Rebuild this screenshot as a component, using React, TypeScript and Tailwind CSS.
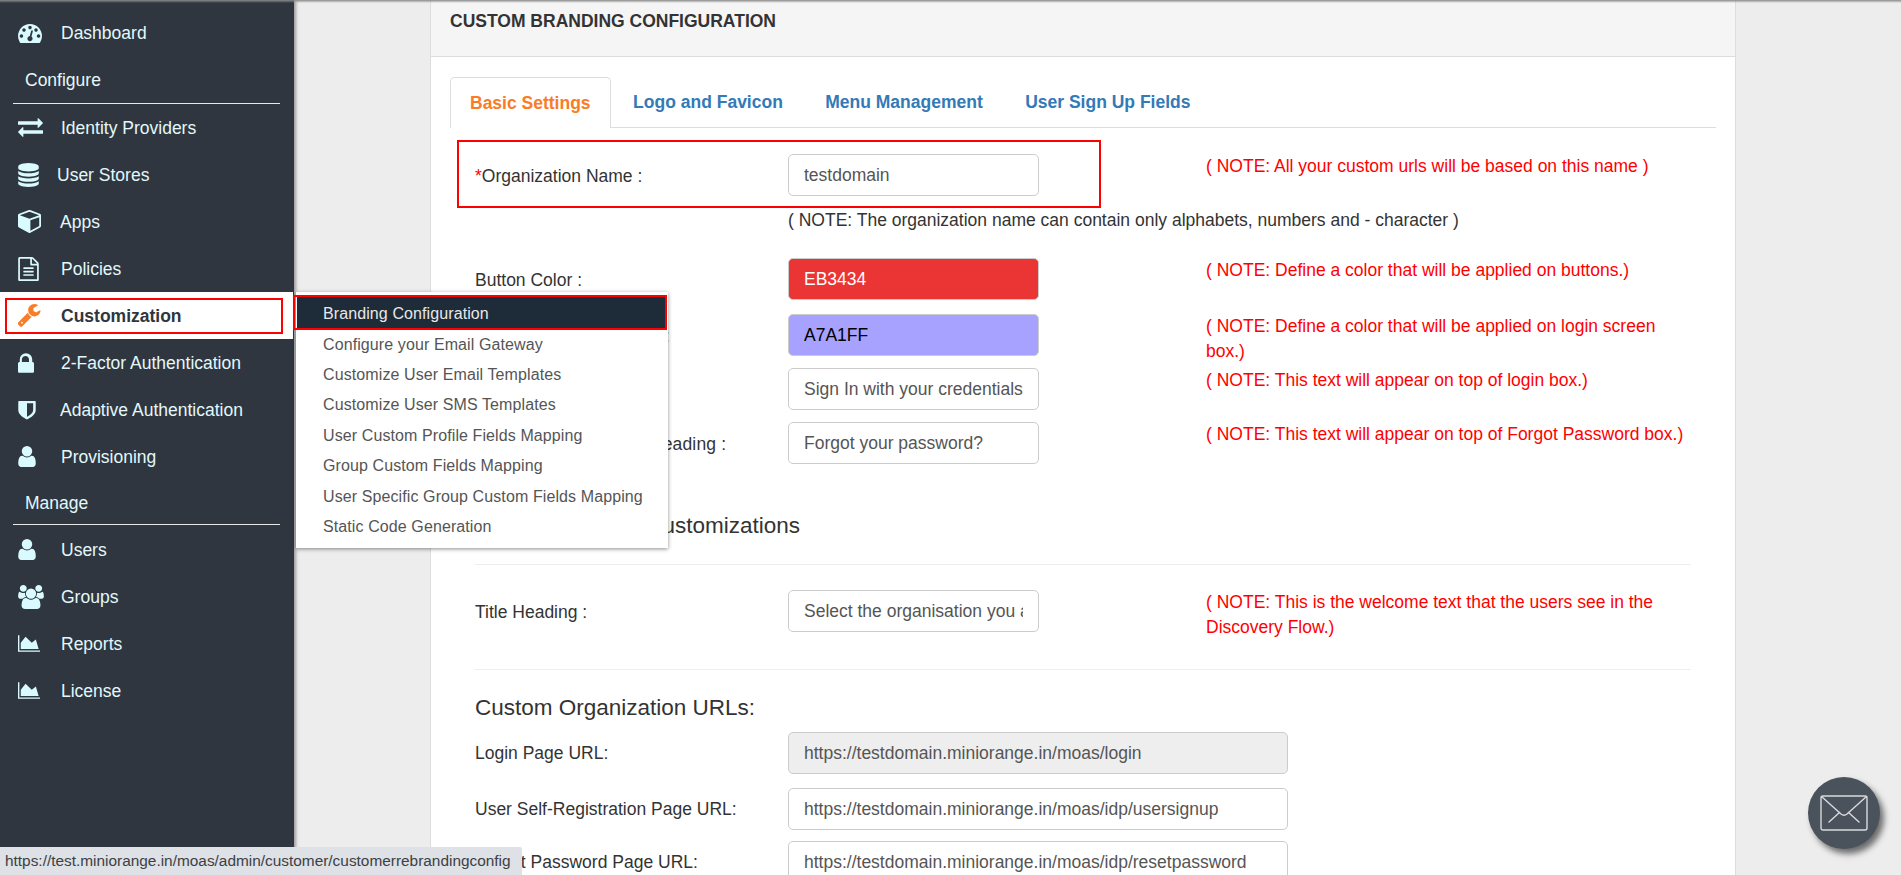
import React from "react";

type IconDef = { vb: string; d: string };

const I: Record<string, IconDef> = {
  dashboard: { vb: "0 256 1792 1408", d: "M384 1152q0-53-37.5-90.5t-90.5-37.5-90.5 37.5-37.5 90.5 37.5 90.5 90.5 37.5 90.5-37.5 37.5-90.5zm192-448q0-53-37.5-90.5t-90.5-37.5-90.5 37.5-37.5 90.5 37.5 90.5 90.5 37.5 90.5-37.5 37.5-90.5zm428 481l101-382q6-26-7.5-48.5t-38.5-29.5-48 6.5-30 39.5l-101 382q-60 5-107 43.5t-63 98.5q-20 77 20 146t117 89 146-20 89-117q16-60-6-117t-72-91zm660-33q0-53-37.5-90.5t-90.5-37.5-90.5 37.5-37.5 90.5 37.5 90.5 90.5 37.5 90.5-37.5 37.5-90.5zm-640-640q0-53-37.5-90.5t-90.5-37.5-90.5 37.5-37.5 90.5 37.5 90.5 90.5 37.5 90.5-37.5 37.5-90.5zm448 192q0-53-37.5-90.5t-90.5-37.5-90.5 37.5-37.5 90.5 37.5 90.5 90.5 37.5 90.5-37.5 37.5-90.5zm320 448q0 261-141 483-19 29-54 29h-1402q-35 0-54-29-141-221-141-483 0-182 71-348t191-286 286-191 348-71 348 71 286 191 191 286 71 348z" },
  exchange: { vb: "0 288 1792 1344", d: "M1792 1184v192q0 13-9.5 22.5t-22.5 9.5h-1376v192q0 13-9.5 22.5t-22.5 9.5q-12 0-24-10l-319-320q-9-9-9-22 0-14 9-23l320-320q9-9 23-9 13 0 22.5 9.5t9.5 22.5v192h1376q13 0 22.5 9.5t9.5 22.5zm0-544q0 14-9 23l-320 320q-9 9-23 9-13 0-22.5-9.5t-9.5-22.5v-192h-1376q-13 0-22.5-9.5t-9.5-22.5v-192q0-13 9.5-22.5t22.5-9.5h1376v-192q0-14 9-23t23-9q12 0 24 10l319 319q9 9 9 23z" },
  database: { vb: "0 0 1536 1792", d: "M768 768q237 0 443-43t325-127v170q0 69-103 128t-280 93.5-385 34.5-385-34.5-280-93.5-103-128v-170q119 84 325 127t443 43zm0 768q237 0 443-43t325-127v170q0 69-103 128t-280 93.5-385 34.5-385-34.5-280-93.5-103-128v-170q119 84 325 127t443 43zm0-384q237 0 443-43t325-127v170q0 69-103 128t-280 93.5-385 34.5-385-34.5-280-93.5-103-128v-170q119 84 325 127t443 43zm0-1152q208 0 385 34.5t280 93.5 103 128v128q0 69-103 128t-280 93.5-385 34.5-385-34.5-280-93.5-103-128v-128q0-69 103-128t280-93.5 385-34.5z" },
  cube: { vb: "0 128 1664 1664", d: "M896 1629l640-349v-636l-640 233v752zm-64-865l698-254-698-254-698 254zm832-252v768q0 35-18 65t-49 47l-704 384q-28 16-61 16t-61-16l-704-384q-31-17-49-47t-18-65v-768q0-40 23-73t61-47l704-256q22-8 44-8t44 8l704 256q38 14 61 47t23 73z" },
  file: { vb: "128 0 1536 1792", d: "M1596 380q28 28 48 76t20 88v1152q0 40-28 68t-68 28h-1344q-40 0-68-28t-28-68v-1600q0-40 28-68t68-28h896q40 0 88 20t76 48zm-444-244v376h376q-10-29-22-41l-313-313q-12-12-41-22zm384 1528v-1024h-416q-40 0-68-28t-28-68v-416h-768v1536h1280zm-1024-864q0-14 9-23t23-9h704q14 0 23 9t9 23v64q0 14-9 23t-23 9h-704q-14 0-23-9t-9-23v-64zm736 224q14 0 23 9t9 23v64q0 14-9 23t-23 9h-704q-14 0-23-9t-9-23v-64q0-14 9-23t23-9h704zm0 256q14 0 23 9t9 23v64q0 14-9 23t-23 9h-704q-14 0-23-9t-9-23v-64q0-14 9-23t23-9h704z" },
  wrench: { vb: "64 128 1600 1664", d: "M384 1472q0-26-19-45t-45-19-45 19-19 45 19 45 45 19 45-19 19-45zm644-420l-682 682q-37 37-90 37-52 0-91-37l-106-108q-38-36-38-90 0-53 38-91l681-681q39 98 114.5 173.5t173.5 114.5zm634-435q0 39-23 106-47 134-164.5 217.5t-258.5 83.5q-185 0-316.5-131.5t-131.5-316.5 131.5-316.5 316.5-131.5q58 0 121.5 16.5t107.5 46.5q16 11 16 28t-16 28l-293 169v224l193 106q5-3 79-48.5t135.5-81 70.5-35.5q15 0 23.5 10t8.5 25z" },
  lock: { vb: "304 64 1152 1408", d: "M520 704h576v-192q0-106-75-181t-181-75-181 75-75 181v192zm936 96v576q0 40-28 68t-68 28h-960q-40 0-68-28t-28-68v-576q0-40 28-68t68-28h32v-192q0-184 132-316t316-132 316 132 132 316v192h32q40 0 68 28t28 68z" },
  shield: { vb: "0 0 19 20", d: "M1 0.5H18Q18.7 0.5 18.7 1.2V10C18.7 15 13.5 18 9.5 20C5.5 18 0.3 15 0.3 10V1.2Q0.3 0.5 1 0.5ZM9.5 3V17.2C12.5 15.5 16 13.3 16 10V3Z" },
  user: { vb: "256 128 1280 1536", d: "M1536 1399q0 109-62.5 187t-150.5 78h-854q-88 0-150.5-78t-62.5-187q0-85 8.5-160.5t31.5-152 58.5-131 94-89 134.5-34.5q131 128 313 128t313-128q76 0 134.5 34.5t94 89 58.5 131 31.5 152 8.5 160.5zm-256-887q0 159-112.5 271.5t-271.5 112.5-271.5-112.5-112.5-271.5 112.5-271.5 271.5-112.5 271.5 112.5 112.5 271.5z" },
  users: { vb: "0 0 1920 1792", d: "M593 896q-162 5-265 128h-134q-82 0-138-40.5t-56-118.5q0-353 124-353 6 0 43.5 21t97.5 42.5 119 21.5q67 0 133-23-5 37-5 66 0 139 81 256zm1071 637q0 120-73 189.5t-194 69.5h-874q-121 0-194-69.5t-73-189.5q0-53 3.5-103.5t14-109 26.5-108.5 43-97.5 62-81 85.5-53.5 111.5-20q10 0 43 21.5t73 48 107 48 135 21.5 135-21.5 107-48 73-48 43-21.5q61 0 111.5 20t85.5 53.5 62 81 43 97.5 26.5 108.5 14 109 3.5 103.5zm-1024-1277q0 106-75 181t-181 75-181-75-75-181 75-181 181-75 181 75 75 181zm704 384q0 159-112.5 271.5t-271.5 112.5-271.5-112.5-112.5-271.5 112.5-271.5 271.5-112.5 271.5 112.5 112.5 271.5zm576 225q0 78-56 118.5t-138 40.5h-134q-103-123-265-128 81-117 81-256 0-29-5-66 66 23 133 23 59 0 119-21.5t97.5-42.5 43.5-21q124 0 124 353zm-128-609q0 106-75 181t-181 75-181-75-75-181 75-181 181-75 181 75 75 181z" },
  area: { vb: "0 128 2048 1536", d: "M2048 1536v128h-2048v-1536h128v1408h1920zm-384-1024l256 896h-1664v-576l448-576 576 576z" },
};

function Glyph({ def, className }: { def: IconDef; className: string }) {
  return (
    <svg viewBox={def.vb} className={className} fill="currentColor" fillRule="evenodd" aria-hidden="true">
      <path d={def.d} />
    </svg>
  );
}

const navTop = [
  { label: "Identity Providers", def: I.exchange, box: "w-[43px]", icon: "w-[25px] h-[19px]" },
  { label: "User Stores", def: I.database, box: "w-[39px]", icon: "w-[21px] h-[24px]" },
  { label: "Apps", def: I.cube, box: "w-[42px]", icon: "w-[23px] h-[23px]" },
  { label: "Policies", def: I.file, box: "w-[43px]", icon: "w-[21px] h-[24px]" },
];
const navMid = [
  { label: "2-Factor Authentication", def: I.lock, box: "w-[43px]", icon: "w-[16px] h-[20px]" },
  { label: "Adaptive Authentication", def: I.shield, box: "w-[42px]", icon: "w-[18px] h-[20px]" },
  { label: "Provisioning", def: I.user, box: "w-[43px]", icon: "w-[18px] h-[21px]" },
];
const navBottom = [
  { label: "Users", def: I.user, box: "w-[43px]", icon: "w-[18px] h-[21px]" },
  { label: "Groups", def: I.users, box: "w-[43px]", icon: "w-[26px] h-[24px]" },
  { label: "Reports", def: I.area, box: "w-[43px]", icon: "w-[22px] h-[17px]" },
  { label: "License", def: I.area, box: "w-[43px]", icon: "w-[22px] h-[17px]" },
];

const menuItems = [
  "Configure your Email Gateway",
  "Customize User Email Templates",
  "Customize User SMS Templates",
  "User Custom Profile Fields Mapping",
  "Group Custom Fields Mapping",
  "User Specific Group Custom Fields Mapping",
  "Static Code Generation",
];

type Item = { label: string; def: IconDef; box: string; icon: string };

function NavRow({ item, flush }: { item: Item; flush?: boolean }) {
  return (
    <div className="flex items-center h-[47px] pl-[18px] text-[#e3f8fb]">
      <div className={`${item.box} shrink-0 flex items-center`}>
        <Glyph def={item.def} className={`${item.icon} text-[#d9fbff]`} />
      </div>
      <span className={flush ? "" : "pt-[2px]"}>{item.label}</span>
    </div>
  );
}

function SectionTitle({ children }: { children: React.ReactNode }) {
  return <div className="flex items-center h-full pl-[25px] text-[#e3f8fb]">{children}</div>;
}

function Field({ value, tone, wide }: { value: string; tone?: string; wide?: boolean }) {
  return (
    <div
      className={`${wide ? "w-[500px]" : "w-[251px]"} h-[42px] rounded-[5px] border border-[#ccc] px-[15px] flex items-center ${tone ?? "bg-white text-[#555]"}`}
    >
      <div className="overflow-hidden whitespace-nowrap">{value}</div>
    </div>
  );
}

function Row({ label, value, tone, note, top }: { label: React.ReactNode; value: string; tone?: string; note: string; top: string }) {
  return (
    <div className={`grid grid-cols-[313px_418px_484px] grid-rows-[42px] h-[42px] ${top}`}>
      <div className="flex items-center whitespace-nowrap text-[#333] pt-[2px]">{label}</div>
      <Field value={value} tone={tone} />
      <div className="text-[#f00] leading-[25px]">{note}</div>
    </div>
  );
}

function UrlRow({ label, value, tone, top, labelClass }: { label: string; value: string; tone?: string; top: string; labelClass?: string }) {
  return (
    <div className={`grid grid-cols-[313px_1fr] grid-rows-[42px] h-[42px] ${top}`}>
      <div className={`flex items-center whitespace-nowrap text-[#333] ${labelClass ?? ""}`}>{label}</div>
      <Field value={value} tone={tone} wide />
    </div>
  );
}

export default function App() {
  return (
    <div className="relative flex w-[1901px] h-[875px] overflow-hidden bg-[#ededed] text-[17.5px] font-['Liberation_Sans',Arial,sans-serif]">
      {/* Sidebar */}
      <aside className="w-[294px] shrink-0 h-full bg-[#2f3640] pt-[10px] shadow-[2px_0_3px_rgba(0,0,0,0.35)] z-10">
        <NavRow flush item={{ label: "Dashboard", def: I.dashboard, box: "w-[43px]", icon: "w-[24px] h-[19px]" }} />
        <div className="h-[47px] relative">
          <SectionTitle>Configure</SectionTitle>
          <div className="absolute left-[13px] right-[14px] bottom-0 h-[1px] bg-[#e8e8e8]" />
        </div>
        {navTop.map((n) => (
          <NavRow key={n.label} item={n} />
        ))}
        <div className="relative flex items-center h-[47px] w-[293px] bg-white pl-[18px] font-bold text-[#2f3640]">
          <div className="w-[43px] shrink-0 flex items-center">
            <Glyph def={I.wrench} className="w-[23px] h-[23px] text-[#f97c26]" />
          </div>
          <span className="pt-[2px]">Customization</span>
          <div className="absolute left-[5px] right-[10px] top-[6px] bottom-[5px] border-2 border-[#f00]" />
        </div>
        {navMid.map((n) => (
          <NavRow key={n.label} item={n} />
        ))}
        <div className="h-[46px] relative">
          <SectionTitle>Manage</SectionTitle>
          <div className="absolute left-[13px] right-[14px] bottom-[1px] h-[1px] bg-[#e8e8e8]" />
        </div>
        {navBottom.map((n) => (
          <NavRow key={n.label} item={n} />
        ))}
      </aside>

      {/* Main panel */}
      <main className="ml-[136px] w-[1306px] h-[1000px] shrink-0 bg-white border-x border-[#ddd] box-border">
        <div className="h-[57px] bg-[#f5f5f5] border-b border-[#ddd] pl-[19px] pt-[9px]">
          <h1 className="font-bold text-[#333] uppercase leading-[24px]">Custom Branding Configuration</h1>
        </div>

        <div className="flex h-[51px] mt-[20px] mx-[19px] border-b border-[#ddd] font-bold">
          <div className="h-[51px] px-[19px] mr-[2.5px] flex items-center rounded-t-[5px] border border-b-0 border-[#ddd] bg-white text-[#f97c26]">
            Basic Settings
          </div>
          <div className="h-[50px] px-[20px] mr-[2.4px] flex items-center text-[#337ab7]">Logo and Favicon</div>
          <div className="h-[50px] px-[20px] mr-[2.4px] flex items-center text-[#337ab7]">Menu Management</div>
          <div className="h-[50px] px-[20px] flex items-center text-[#337ab7]">User Sign Up Fields</div>
        </div>

        <div className="relative pt-[26px] pl-[44px] pr-[44px]">
          <div className="absolute left-[26px] top-[12px] w-[644px] h-[68px] border-2 border-[#f00]" />
          <Row
            top=""
            label={<><span className="text-[#f00]">*</span>Organization Name :</>}
            value="testdomain"
            note="( NOTE: All your custom urls will be based on this name )"
          />
          <div className="ml-[313px] mt-[12px] h-[25px] leading-[25px] text-[#333] whitespace-nowrap">
            ( NOTE: The organization name can contain only alphabets, numbers and - character )
          </div>
          <Row
            top="mt-[25px]"
            label="Button Color :"
            value="EB3434"
            tone="bg-[#eb3434] text-white"
            note="( NOTE: Define a color that will be applied on buttons.)"
          />
          <Row
            top="mt-[14px]"
            label="Login Screen Box Color :"
            value="A7A1FF"
            tone="bg-[#a7a1ff] text-black"
            note="( NOTE: Define a color that will be applied on login screen box.)"
          />
          <Row
            top="mt-[12px]"
            label="Login Screen Heading :"
            value="Sign In with your credentials"
            note="( NOTE: This text will appear on top of login box.)"
          />
          <Row
            top="mt-[12px]"
            label={<span className="tracking-[0.14px]">Forgot Password Box Heading :</span>}
            value="Forgot your password?"
            note="( NOTE: This text will appear on top of Forgot Password box.)"
          />

          <h2 className="mt-[47px] h-[30px] leading-[30px] text-[22.5px] text-[#333] whitespace-nowrap">Discovery Flow{"\u00a0\u00a0\u00a0"}Customizations</h2>
          <div className="mt-[23px] h-[1px] bg-[#eee]" />
          <Row
            top="mt-[25px]"
            label="Title Heading :"
            value="Select the organisation you are part of"
            note="( NOTE: This is the welcome text that the users see in the Discovery Flow.)"
          />
          <div className="mt-[37px] h-[1px] bg-[#eee]" />
          <h2 className="mt-[23px] h-[30px] leading-[30px] text-[22.5px] text-[#333] whitespace-nowrap">Custom Organization URLs:</h2>
          <UrlRow
            top="mt-[9px]"
            label="Login Page URL:"
            value="https://testdomain.miniorange.in/moas/login"
            tone="bg-[#eee] text-[#555]"
          />
          <UrlRow top="mt-[14px]" label="User Self-Registration Page URL:" value="https://testdomain.miniorange.in/moas/idp/usersignup" />
          <UrlRow top="mt-[11px]" labelClass="pl-[5px]" label="Reset Password Page URL:" value="https://testdomain.miniorange.in/moas/idp/resetpassword" />
        </div>
      </main>

      {/* Flyout menu */}
      <div className="absolute left-[296px] top-[292px] z-20 w-[372px] h-[256px] bg-white pt-[5px] text-[16px] tracking-[0.1px] text-[#555] shadow-[0_1px_4px_rgba(0,0,0,0.45)]">
        <div className="relative h-[32px] ml-[1px] mr-[1px] bg-[#1e2b38] text-[#e8e8e8] flex items-center pl-[26px] pt-[2px]">
          Branding Configuration
          <div className="absolute -left-[4px] -top-[2px] right-0 -bottom-[1px] border-2 border-[#f00]" />
        </div>
        {menuItems.map((m) => (
          <div key={m} className="h-[30.4px] flex items-center pl-[27px] pt-[1px] whitespace-nowrap">
            {m}
          </div>
        ))}
      </div>

      {/* Top shade */}
      <div className="absolute left-0 right-0 top-0 z-30 h-[3px] bg-gradient-to-b from-[#8a8a8a] to-transparent" />

      {/* Status bar */}
      <div className="absolute left-0 bottom-0 z-30 w-[522px] h-[28px] bg-[#dee1e6] pl-[5px] flex items-center text-[15.4px] text-[#3c4043] whitespace-nowrap rounded-tr-[2px]">
        https://test.miniorange.in/moas/admin/customer/customerrebrandingconfig
      </div>

      {/* Chat button */}
      <div className="absolute left-[1808px] top-[777px] z-30 w-[72px] h-[72px] rounded-full bg-[#4a525c] flex items-center justify-center shadow-[4px_5px_6px_rgba(0,0,0,0.55)]">
        <svg viewBox="0 0 48 36" className="w-[48px] h-[36px]" fill="none" stroke="#d8dbde" strokeWidth="1.4" strokeLinejoin="round" strokeLinecap="round">
          <rect x="1" y="1" width="46" height="34" rx="2" />
          <path d="M1.5 1.5 L21 19 Q24 21.5 27 19 L46.5 1.5" />
          <path d="M9 27 L19.5 17.5 M39 27 L28.5 17.5" />
        </svg>
      </div>
    </div>
  );
}
